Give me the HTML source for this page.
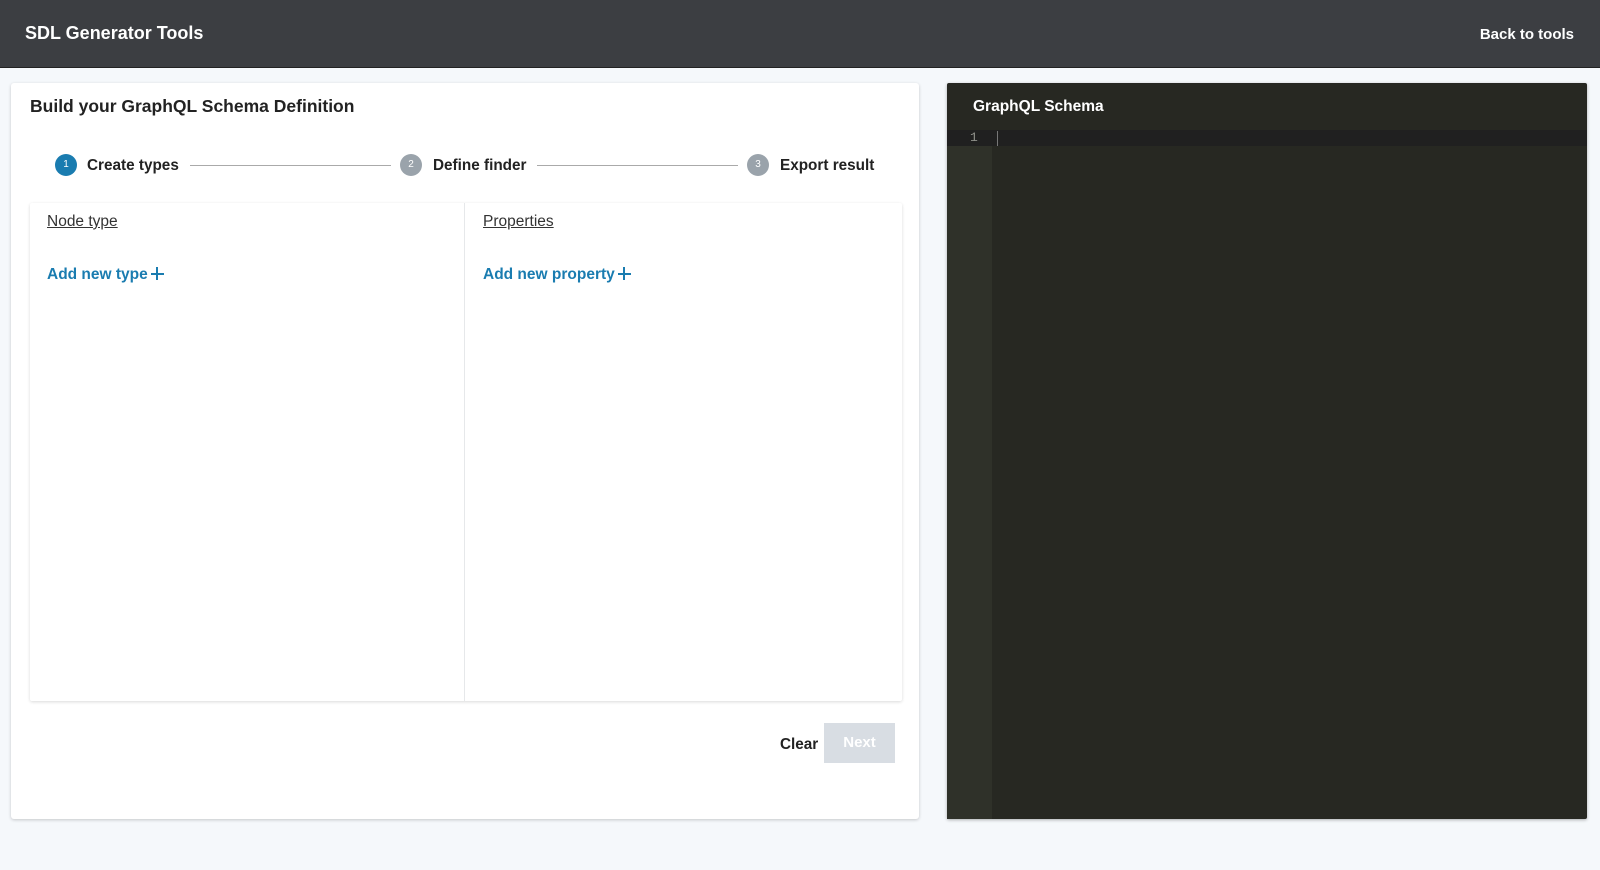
<!DOCTYPE html>
<html><head><style>
*{box-sizing:border-box;margin:0;padding:0}
body{width:1600px;height:870px;background:#f5f8fb;font-family:"Liberation Sans",sans-serif;position:relative;overflow:hidden;color:#1f2328}
.hdr{position:absolute;left:0;top:0;width:1600px;height:68px;background:#3c3e42;border-bottom:1px solid #222;color:#fff;font-weight:bold}
.hdr .t{position:absolute;left:25px;top:23px;font-size:18px}
.hdr .b{position:absolute;right:26px;top:26px;font-size:15px}
.card{position:absolute;left:11px;top:83px;width:908px;height:736px;background:#fff;border-radius:3px;box-shadow:0 1px 3px rgba(0,0,0,.2)}
.abs{position:absolute;white-space:nowrap}
.h1{left:19px;top:13px;font-size:17.5px;font-weight:bold;color:#222}
.circ{width:22px;height:22px;border-radius:50%;color:#fff;font-size:10px;text-align:center;line-height:22px}
.st{font-size:15.3px;font-weight:bold;color:#222}
.ln{height:1px;background:#aaa}
.box{position:absolute;left:19px;top:120px;width:872px;height:498px;background:#fff;box-shadow:0 1px 3px rgba(0,0,0,.15);border-radius:2px}
.lbl{font-size:15.5px;text-decoration:underline;color:#333}
.add{font-size:15.5px;font-weight:bold;color:#1a7cb0}
.plus{display:inline-block;width:13px;height:13px;position:relative;top:1px;margin-left:3px}
.plus:before{content:"";position:absolute;left:0;top:5.5px;width:13px;height:2px;background:#1a7cb0}
.plus:after{content:"";position:absolute;left:5.5px;top:0;width:2px;height:13px;background:#1a7cb0}
.ed{position:absolute;left:947px;top:83px;width:640px;height:736px;background:#272822;border-radius:2px;box-shadow:0 1px 3px rgba(0,0,0,.3)}
</style></head><body>
<div class="hdr"><div class="t">SDL Generator Tools</div><div class="b">Back to tools</div></div>
<div class="card">
<div class="abs h1">Build your GraphQL Schema Definition</div>
<div class="abs circ" style="left:44px;top:71px;background:#1a7cb0">1</div>
<div class="abs st" style="left:76px;top:74px">Create types</div>
<div class="abs ln" style="left:179px;top:82px;width:201px"></div>
<div class="abs circ" style="left:389px;top:71px;background:#9aa3ab">2</div>
<div class="abs st" style="left:422px;top:74px">Define finder</div>
<div class="abs ln" style="left:526px;top:82px;width:201px"></div>
<div class="abs circ" style="left:736px;top:71px;background:#9aa3ab">3</div>
<div class="abs st" style="left:769px;top:74px">Export result</div>
<div class="box">
<div class="abs" style="left:434px;top:0;width:1px;height:498px;background:#e6e8ea"></div>
<div class="abs lbl" style="left:17px;top:10px">Node type</div>
<div class="abs add" style="left:17px;top:63px">Add new type<span class="plus"></span></div>
<div class="abs lbl" style="left:453px;top:10px">Properties</div>
<div class="abs add" style="left:453px;top:63px">Add new property<span class="plus"></span></div>
</div>
<div class="abs st" style="left:769px;top:653px">Clear</div>
<div class="abs" style="left:813px;top:640px;width:71px;height:40px;background:#d8dde3;color:#fff;font-size:15px;font-weight:bold;text-align:center;line-height:40px">Next</div>
</div>
<div class="ed">
<div class="abs" style="left:0;top:47px;width:45px;height:689px;background:#2f3129"></div>
<div class="abs" style="left:0;top:47px;width:640px;height:16px;background:#202020"></div>
<div class="abs" style="left:26px;top:15px;color:#fff;font-weight:bold;font-size:15.5px">GraphQL Schema</div>
<div class="abs" style="left:23px;top:47px;color:#8f908a;font-family:'Liberation Mono',monospace;font-size:13px">1</div>
<div class="abs" style="left:50px;top:48px;width:1px;height:15px;background:#777"></div>
</div>
</body></html>
